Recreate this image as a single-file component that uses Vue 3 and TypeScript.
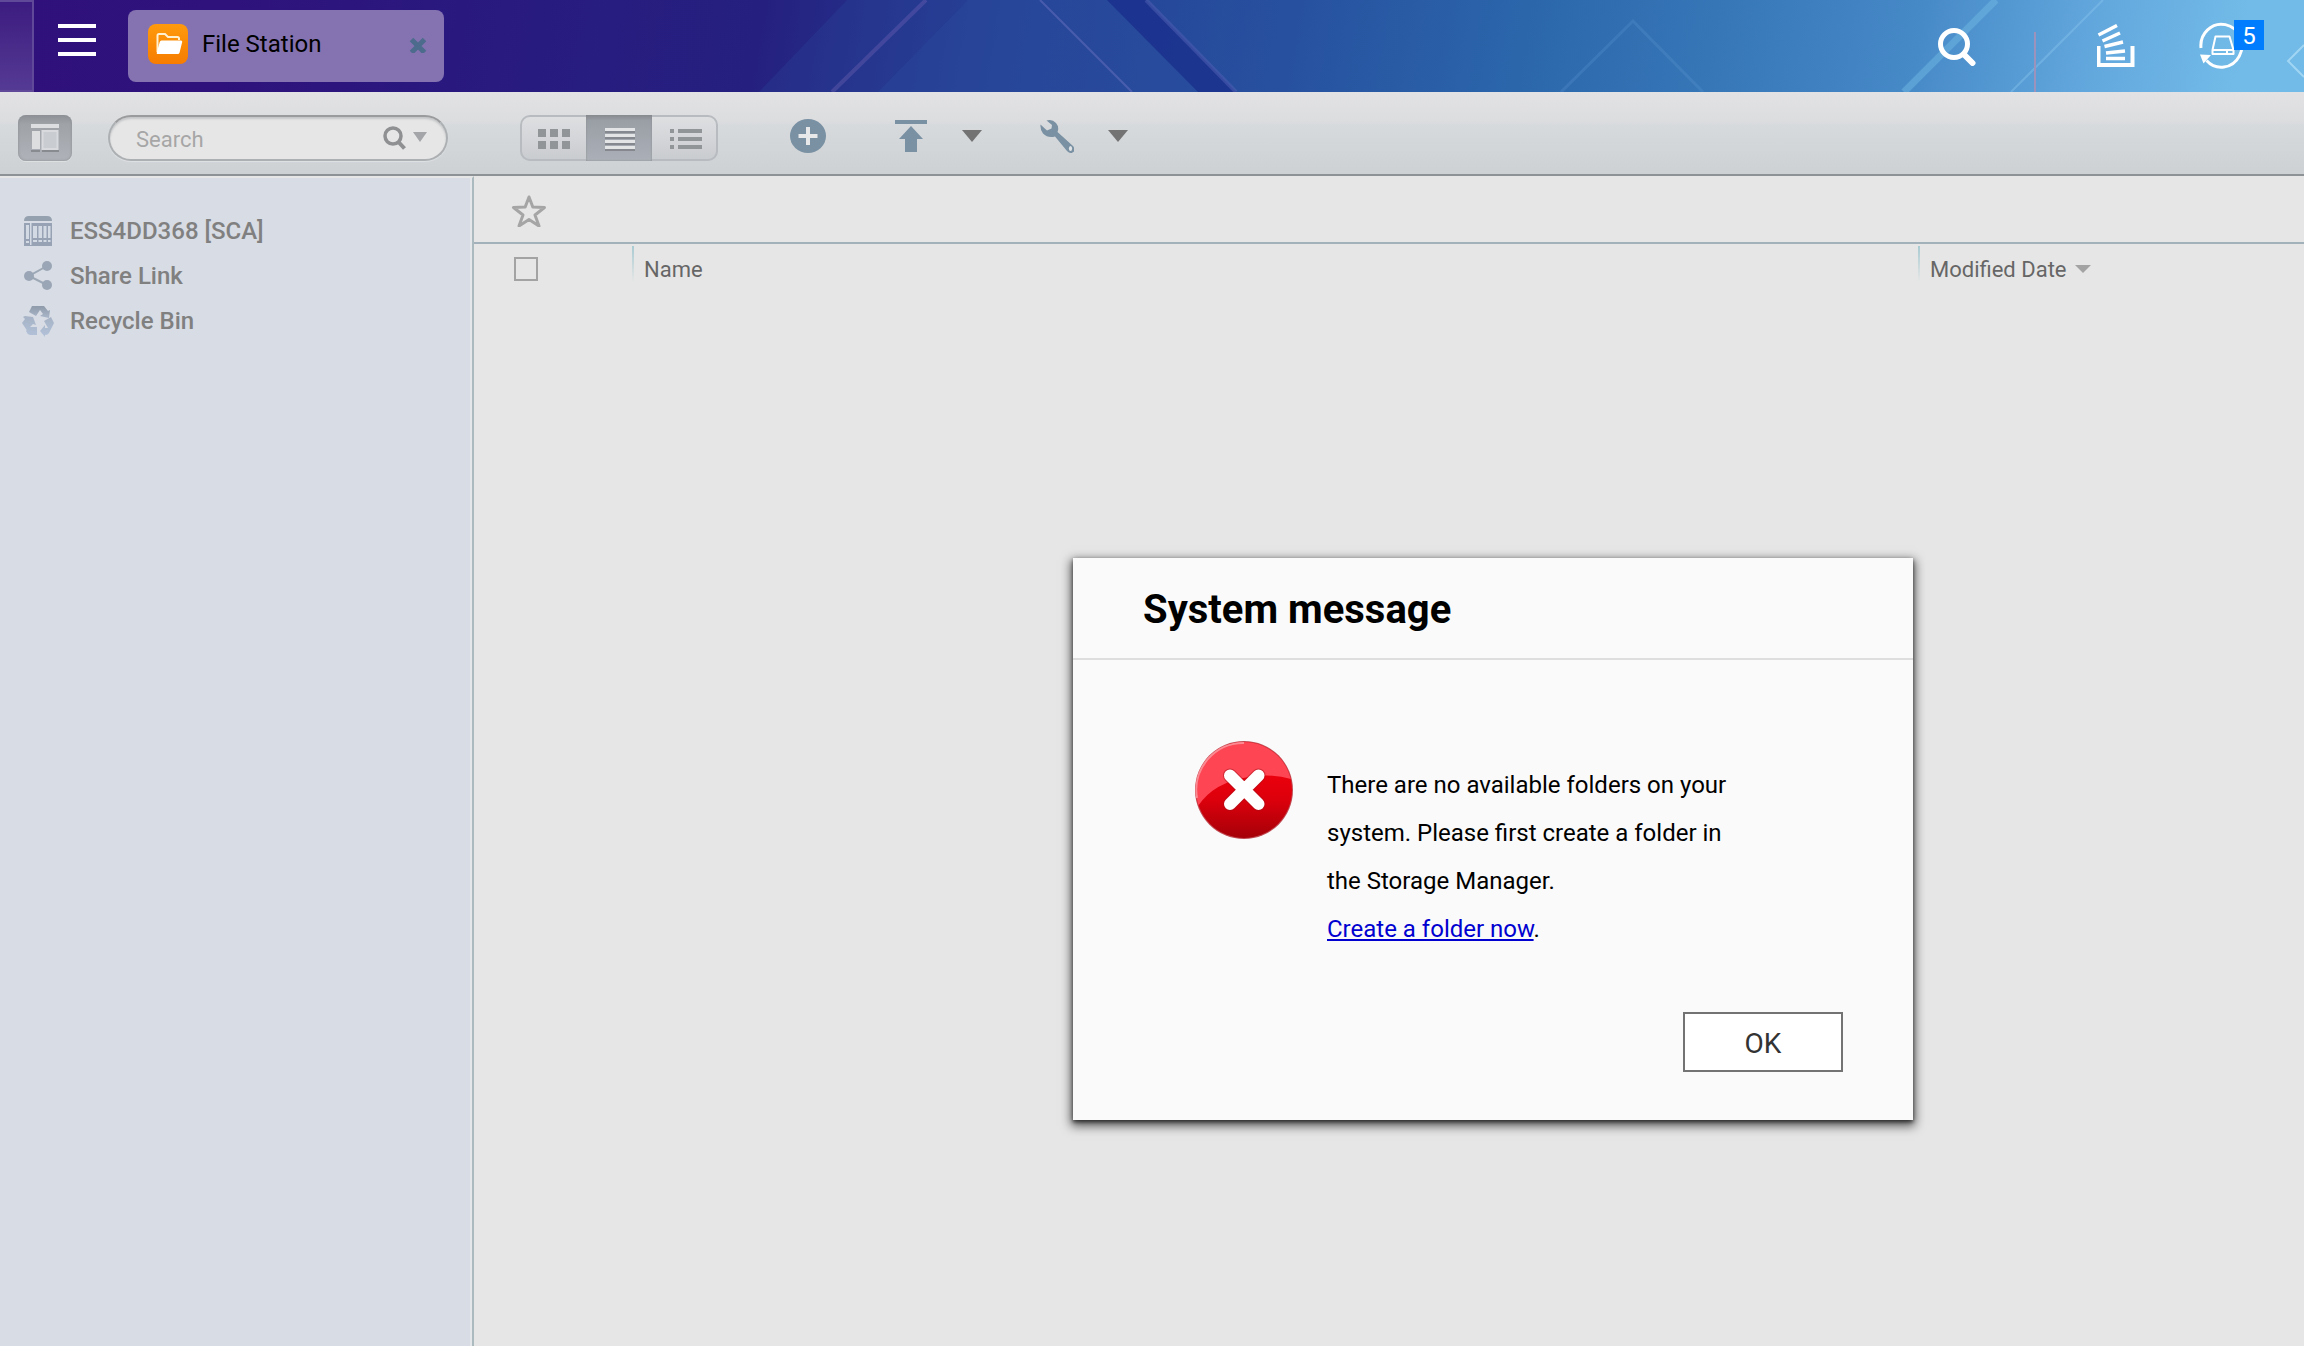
<script setup lang="ts">
import { ref } from 'vue'

type ViewMode = 'grid' | 'list' | 'details'

interface Place {
  id: 'nas' | 'share' | 'bin'
  label: string
}

const places: Place[] = [
  { id: 'nas', label: 'ESS4DD368 [SCA]' },
  { id: 'share', label: 'Share Link' },
  { id: 'bin', label: 'Recycle Bin' },
]

const view = ref<ViewMode>('list')
const query = ref('')
const taskCount = ref(5)
const messageOpen = ref(true)
</script>

<template>
  <div class="desktop">
    <header class="topbar">
      <svg class="wallpaper" viewBox="0 0 2304 92" preserveAspectRatio="none" aria-hidden="true">
        <path d="M847 0H1107L1198 92H759Z" fill="#2c4ea0" opacity=".26" />
        <path d="M968 0H1107L1198 92H878Z" fill="#2c4ea0" opacity=".3" />
        <path d="M1107 0H1146L1236 92H1198Z" fill="#1a2f8c" opacity=".8" />
        <path d="M926 0L832 92" stroke="#5a55a8" stroke-opacity=".55" stroke-width="4" />
        <path d="M1040 0L1132 92" stroke="#6a6fc0" stroke-opacity=".5" stroke-width="2" />
        <path d="M1146 0L1236 92" stroke="#4e5cb0" stroke-opacity=".55" stroke-width="4" />
        <path d="M1561 92L1633 21L1703 92" fill="none" stroke="#5a94d0" stroke-opacity=".3" stroke-width="3" />
        <path d="M1996 0L1904 92" stroke="#6fb8e2" stroke-opacity=".5" stroke-width="7" />
        <path d="M2103 0L2011 92" stroke="#8cc8f0" stroke-opacity=".4" stroke-width="2" />
        <path d="M2304 45L2288 61L2304 77" fill="none" stroke="#b4e0f8" stroke-opacity=".7" stroke-width="2" />
      </svg>
      <div class="show-desktop"></div>
      <button class="plain menu" type="button" aria-label="Main menu">
        <svg width="40" height="32" viewBox="0 0 40 32"><path d="M1 0h38v4H1zM1 14h38v4H1zM1 28h38v4H1z" fill="#fff" /></svg>
      </button>
      <div class="task">
        <svg width="40" height="40" viewBox="0 0 40 40" aria-hidden="true">
          <defs>
            <linearGradient id="orange" x1="0" y1="0" x2="0" y2="1">
              <stop offset="0" stop-color="#ff9a0c" />
              <stop offset="1" stop-color="#f67c00" />
            </linearGradient>
          </defs>
          <rect width="40" height="40" rx="8" fill="url(#orange)" />
          <path d="M9.500 28V11.500q0-1.500 1.500-1.500h6l3 3h9.500q1.500 0 1.500 1.500V16" fill="none" stroke="#fff0d0" stroke-width="2" />
          <path d="M13.500 16.500H33q1.500 0 1.200 1.500l-2.600 10.500q-.4 1.500-1.800 1.500H9.500q-1 0-.8-1l3-11q.4-1.500 1.800-1.500z" fill="#fff" />
        </svg>
        <span class="task-name">File Station</span>
        <button class="plain" type="button" aria-label="Close File Station">
          <svg width="18" height="18" viewBox="0 0 18 18"><path d="M2.500 4.500l13 13M15.500 4.500l-13 13" stroke="#4d6b8c" stroke-width="5" /></svg>
        </button>
      </div>
      <div class="tray">
        <button class="plain" type="button" aria-label="Search">
          <svg width="38" height="40" viewBox="0 0 38 40" fill="none" stroke="#fff">
            <circle cx="16" cy="18" r="13.500" stroke-width="5" />
            <path d="M26 28.500l8.500 8.500" stroke-width="6" stroke-linecap="round" />
          </svg>
        </button>
        <span class="tray-line"></span>
        <button class="plain" type="button" aria-label="Background tasks">
          <svg width="40" height="44" viewBox="0 0 40 44" fill="none" stroke="#fff">
            <path d="M1.500 22v19h34V22" stroke-width="4" />
            <path d="M1.500 11L20 1.500M5.500 17L23 9M7.500 22.500L26 18M9 29l19-2M9 34.500h19" stroke-width="3.500" />
          </svg>
        </button>
        <button class="plain sync" type="button" aria-label="External devices">
          <svg width="46" height="48" viewBox="0 0 46 48" fill="none" stroke="#fff">
            <path d="M2 26A20.500 21.500 0 1 1 7.500 38.500" stroke-width="3" />
            <path d="M1 32.500l11 .5L4.500 41.500z" fill="#fff" stroke="none" />
            <path d="M16.500 14.500h14l4 13.500H13.500zM13.500 28h21v4h-21zM28 28v4" stroke-width="2" stroke-linejoin="round" />
          </svg>
          <span class="badge">{{ taskCount }}</span>
        </button>
      </div>
    </header>

    <div class="toolbar">
      <button class="pane-toggle" type="button" aria-label="Toggle folder pane">
        <svg width="28" height="28" viewBox="0 0 28 28">
          <path d="M0 27h9M11 27h17" stroke="#888c91" stroke-width="2" />
          <path d="M0 0h28v4H0z" fill="#dcdee0" />
          <path d="M1 7h8v18H1z" fill="#dcdee0" />
          <path d="M11.500 7h15v18h-15z" fill="#c9ccd0" stroke="#d8dade" stroke-width="2" />
        </svg>
      </button>
      <label class="search">
        <input v-model="query" type="text" placeholder="Search" aria-label="Search" />
        <svg width="46" height="26" viewBox="0 0 46 26" fill="none" aria-hidden="true">
          <circle cx="11" cy="11" r="8" stroke="#8e9092" stroke-width="3.500" />
          <path d="M16.500 17l6 6.500" stroke="#8e9092" stroke-width="4" />
          <path d="M31 7h14l-7 10z" fill="#a3a5a8" />
        </svg>
      </label>

      <div class="views" role="group" aria-label="View mode">
        <button type="button" :class="{ on: view === 'grid' }" aria-label="Thumbnails" @click="view = 'grid'">
          <svg width="34" height="22" viewBox="0 0 34 22"><path d="M1 1h8v8H1zM13 1h8v8h-8zM25 1h8v8h-8zM1 13h8v8H1zM13 13h8v8h-8zM25 13h8v8h-8z" fill="#929598" /></svg>
        </button>
        <button type="button" :class="{ on: view === 'list' }" aria-label="List" @click="view = 'list'">
          <svg width="34" height="24" viewBox="0 0 34 24">
            <path d="M2 5h30M2 11h30M2 17h30M2 23h30" stroke="#85898f" stroke-width="2" />
            <path d="M2 2.500h30M2 8.500h30M2 14.500h30M2 20.500h30" stroke="#e2e4e6" stroke-width="3" />
          </svg>
        </button>
        <button type="button" :class="{ on: view === 'details' }" aria-label="Details" @click="view = 'details'">
          <svg width="34" height="22" viewBox="0 0 34 22" stroke="#929598" stroke-width="4"><path d="M1 3h4M1 11h4M1 19h4M9 3h24M9 11h24M9 19h24" /></svg>
        </button>
      </div>

      <div class="actions">
        <button class="plain" type="button" aria-label="Create folder">
          <svg width="36" height="36" viewBox="0 0 36 36"><ellipse cx="18" cy="18" rx="18" ry="17" fill="#7991a3" /><path d="M18 9v18M8.500 18h19" stroke="#e6e8ea" stroke-width="4" /></svg>
        </button>
        <button class="plain split upload" type="button" aria-label="Upload">
          <svg width="34" height="36" viewBox="0 0 34 36" fill="#7991a3"><path d="M1 2h32v4H1zM17 8l12 13h-6v13H11V21H5z" /></svg>
          <svg width="20" height="12" viewBox="0 0 20 12"><path d="M0 0h20L10 12z" fill="#737373" /></svg>
        </button>
        <button class="plain split" type="button" aria-label="More actions">
          <svg width="34" height="36" viewBox="0 0 34 36">
            <path d="M6.500 2.500Q12 .5 16 5q3.500 4 1.500 9L33 28q3.500 5-.5 6.500Q30 36 27 33L15 18.500Q8 20.500 3 15.500 0 12 .5 6.500l6.500 6 4.500-2 .5-3.500z" fill="#7991a3" />
            <ellipse cx="30.500" cy="30.500" rx="1.600" ry="2.500" fill="#dfe3e6" />
          </svg>
          <svg width="20" height="12" viewBox="0 0 20 12"><path d="M0 0h20L10 12z" fill="#737373" /></svg>
        </button>
      </div>
    </div>

    <div class="body">
      <nav class="sidebar" aria-label="Folders">
        <ul>
          <li v-for="place in places" :key="place.id">
            <a href="#">
              <svg v-if="place.id === 'nas'" width="32" height="32" viewBox="0 0 32 32" aria-hidden="true">
                <path d="M2 6q0-5 5-5h18q5 0 5 5z" fill="#96a1b0" />
                <path d="M2 8h28v23H2z" fill="#97a3b5" />
                <path d="M4 10h3v14H4zM4 26h3v2H4zM11 11h4v12h-4zM16.500 11H20v12h-3.500zM21.500 11h3v12h-3zM26 11h2.500v12H26zM11 25h4v2h-4zM16.500 25H20v2h-3.500zM21.500 25h3v2h-3zM26 25h2.500v2H26zM8 8h1.500v22H8z" fill="#d4dae4" />
              </svg>
              <svg v-else-if="place.id === 'share'" width="32" height="32" viewBox="0 0 32 32" fill="#9aa5b5" aria-hidden="true">
                <path d="M25 6L7 16l18 9" fill="none" stroke="#9da8b6" stroke-width="2" />
                <circle cx="25" cy="6" r="5" /><circle cx="7" cy="16" r="5" /><circle cx="25" cy="25" r="5" />
              </svg>
              <svg v-else width="32" height="32" viewBox="0 0 32 32" aria-hidden="true">
                <defs>
                  <linearGradient id="bin" gradientUnits="userSpaceOnUse" x1="0" y1="1" x2="0" y2="31">
                    <stop offset="0" stop-color="#8f9baa" />
                    <stop offset=".35" stop-color="#a6b3c6" />
                    <stop offset="1" stop-color="#b2c1d8" />
                  </linearGradient>
                </defs>
                <g fill="url(#bin)">
                  <path d="M10 1h12l4 5 2-1-1 8-9-2 3-2-3-4-4 6-7-4z" />
                  <path d="M3 11l8 1 3 8-3-1-3 3-2 5-6-9 3-4-2-2z" />
                  <path d="M7 22h8v8H8q-3-1-4-4z" />
                  <path d="M29 12l3 6-5 10q-1 2-4 2v2l-5-6 5-6v3h3l-4-7z" />
                </g>
              </svg>
              <span>{{ place.label }}</span>
            </a>
          </li>
        </ul>
      </nav>

      <main class="content">
        <div class="path">
          <button class="plain" type="button" aria-label="Add to favorites">
            <svg width="36" height="32" viewBox="0 0 36 32"><path d="M18 2l3.800 10 11.700.5-9.500 7.500 4 11-10-6.500-10 6.500 4-11-9.500-7.500 11.700-.5z" fill="none" stroke="#a5a5a5" stroke-width="3" stroke-linejoin="round" /></svg>
          </button>
        </div>
        <table>
          <colgroup>
            <col class="c-check" />
            <col />
            <col class="c-date" />
          </colgroup>
          <thead>
            <tr>
              <th scope="col"><input type="checkbox" aria-label="Select all" /></th>
              <th scope="col" class="ruled">Name</th>
              <th scope="col" class="ruled">
                <span class="sorted">Modified Date
                  <svg width="16" height="8" viewBox="0 0 16 8" aria-hidden="true"><path d="M0 0h16L8 8z" fill="#a3a3a3" /></svg>
                </span>
              </th>
            </tr>
          </thead>
        </table>
      </main>
    </div>

    <div v-if="messageOpen" class="overlay">
      <section class="dialog" role="alertdialog" aria-labelledby="msg-title">
        <h2 id="msg-title">System message</h2>
        <div class="message">
          <svg width="100" height="100" viewBox="0 0 100 100" aria-hidden="true">
            <defs>
              <linearGradient id="red" x1="0" y1="0" x2="0" y2="1">
                <stop offset=".35" stop-color="#ea000c" />
                <stop offset=".6" stop-color="#dc000c" />
                <stop offset="1" stop-color="#a50008" />
              </linearGradient>
              <clipPath id="disc"><circle cx="50" cy="50" r="48" /></clipPath>
            </defs>
            <circle cx="50" cy="50" r="49" fill="#c04a52" />
            <circle cx="50" cy="50" r="48" fill="url(#red)" />
            <path d="M0 0h100v40Q80 33 55 37 20 42 4 66L0 60z" fill="#fd4553" clip-path="url(#disc)" />
            <path d="M3 58A47 47 0 0 1 50 3" fill="none" stroke="#fb8a92" stroke-width="2" />
            <path d="M36 35.500l28.500 28.500M64.500 35.500L36 64" stroke="#a8101a" stroke-opacity=".5" stroke-width="14" stroke-linecap="round" />
            <path d="M36 35.500l28.500 28.500M64.500 35.500L36 64" stroke="#fff" stroke-width="12" stroke-linecap="round" />
          </svg>
          <p>
            There are no available folders on your system. Please first create a folder in the Storage Manager.<br />
            <a href="#">Create a folder now</a>.
          </p>
        </div>
        <footer>
          <button type="button" @click="messageOpen = false">OK</button>
        </footer>
      </section>
    </div>
  </div>
</template>

<style>
body {
  background: #e6e6e6;
}
</style>

<style scoped>
* {
  box-sizing: border-box;
}

.desktop {
  position: relative;
  display: flex;
  flex-direction: column;
  min-height: 100vh;
  overflow: hidden;
  font-family: Roboto, "Liberation Sans", sans-serif;
  font-size: 24px;
  color: #000;
}

svg {
  display: block;
  flex: none;
}

button,
input {
  font: inherit;
}

.plain {
  display: flex;
  padding: 0;
  border: 0;
  background: none;
}

.topbar {
  position: relative;
  display: flex;
  align-items: center;
  height: 92px;
  background: linear-gradient(100deg, #30117b 0%, #2f127c 10%, #29197f 20%, #252080 33%, #254096 44%, #27519f 56%, #2b66ab 66%, #3676b7 74%, #478ac8 83%, #64a9de 91%, #72bbe8 97%, #72bbe8 100%);
}

.wallpaper {
  position: absolute;
  inset: 0;
  width: 100%;
  height: 100%;
}

.show-desktop,
.menu,
.task,
.tray {
  position: relative;
}

.show-desktop {
  width: 34px;
  height: 92px;
  border: 2px solid #614999;
  border-left: 0;
  background: linear-gradient(#3c1c80, #553a94);
}

.menu {
  margin: 0 31px 12px 23px;
}

.task {
  display: flex;
  align-items: center;
  width: 316px;
  height: 72px;
  padding: 0 17px 4px 20px;
  border-radius: 8px;
  background: #8473b0;
}

.task-name {
  flex: 1;
  padding-left: 14px;
}

.tray {
  display: flex;
  align-items: center;
  height: 92px;
  margin-left: auto;
  padding-right: 59px;
}

.tray-line {
  align-self: flex-end;
  width: 2px;
  height: 60px;
  margin: 0 61px 0 58px;
  background: #9c93bd;
}

.sync {
  position: relative;
  margin-left: 62px;
}

.badge {
  position: absolute;
  top: -2px;
  right: -19px;
  width: 30px;
  height: 30px;
  background: #007dff;
  color: #fff;
  line-height: 32px;
  text-align: center;
}

.toolbar {
  display: flex;
  align-items: center;
  height: 84px;
  padding: 10px 18px 0;
  border-bottom: 2px solid #8d9296;
  background: linear-gradient(#e2e2e4, #dcdddf 35%, #d7dadd 40%, #cdd1d4);
}

.pane-toggle {
  display: flex;
  align-items: center;
  justify-content: center;
  width: 54px;
  height: 46px;
  padding: 0;
  border: 0;
  border-radius: 8px;
  background: linear-gradient(#8e9297, #9fa3a8 20%, #afb3b9);
  box-shadow: inset 0 0 3px #8a8e92, 0 1px 0 #dee0e2;
}

.search {
  display: flex;
  align-items: center;
  width: 340px;
  height: 46px;
  margin-left: 36px;
  padding: 0 18px 0 26px;
  border: 2px solid #adb0b3;
  border-top-color: #999b9d;
  border-radius: 23px;
  background: #e6e6e6;
  box-shadow: inset 0 2px 2px #c4c6c8, 0 1px 1px #dfe1e3;
}

.search input {
  flex: 1;
  min-width: 0;
  padding: 2px 0 0;
  border: 0;
  outline: 0;
  background: none;
  font-size: 22px;
}

.search input::placeholder {
  color: #a6a6a6;
  opacity: 1;
}

.views {
  display: flex;
  width: 198px;
  height: 46px;
  margin-left: 72px;
  border-radius: 10px;
  background: linear-gradient(#dfe0e2, #c8cbcf);
  box-shadow: inset 0 0 0 2px #b8bbbf;
}

.views button {
  display: flex;
  flex: 1;
  align-items: center;
  justify-content: center;
  padding: 2px 0 0 2px;
  border: 0;
  background: none;
}

.views .on {
  background: linear-gradient(#878a8e, #9a9ea5 12%, #abb0b8);
  box-shadow: inset 0 0 2px #85888c;
}

.actions {
  display: flex;
  align-items: center;
  margin: 0 0 4px 72px;
}

.split {
  align-items: center;
  gap: 34px;
}

.upload {
  margin: 0 58px 0 68px;
}

.body {
  display: flex;
  flex: 1;
}

.sidebar {
  width: 474px;
  border-top: 2px solid #e6e6e6;
  border-right: 2px solid #abbabf;
  background: #d8dce4;
  box-shadow: inset -2px 0 0 #e4e6e9;
}

.sidebar ul {
  margin: 0;
  padding: 30px 22px;
  list-style: none;
}

.sidebar a {
  display: flex;
  align-items: center;
  gap: 16px;
  height: 45px;
  color: #808080;
  font-weight: 500;
  text-decoration: none;
}

.content {
  flex: 1;
}

.path {
  display: flex;
  align-items: center;
  height: 68px;
  padding: 4px 0 0 37px;
  border-bottom: 2px solid #a2b1ba;
}

table {
  width: 100%;
  border-collapse: collapse;
  table-layout: fixed;
  font-size: 22px;
}

.c-check {
  width: 158px;
}

.c-date {
  width: 386px;
}

th {
  height: 50px;
  padding: 0 0 0 12px;
  color: #666;
  font-weight: 400;
  text-align: left;
}

th:first-child {
  padding-left: 40px;
}

th input {
  display: block;
  appearance: none;
  width: 24px;
  height: 24px;
  margin: 0;
  border: 2px solid #a3a3a3;
}

.ruled {
  background: linear-gradient(#a9cbd2, #e6e6e6) 0 2px / 2px 36px no-repeat;
}

.sorted {
  display: flex;
  align-items: center;
  gap: 8px;
}

.overlay {
  position: absolute;
  inset: 0;
  display: grid;
  place-items: center;
  padding: 332px 0 0 682px;
}

.dialog {
  width: 840px;
  background: #fafafa;
  box-shadow: 0 4px 10px 2px #0009, 0 2px 4px #0009;
}

h2 {
  margin: 0;
  padding: 4px 70px 0;
  border-bottom: 2px solid #dedede;
  font-size: 40px;
  font-weight: 700;
  line-height: 96px;
}

.message {
  display: flex;
  gap: 33px;
  padding: 80px 176px 0 121px;
}

.message p {
  margin: 21px 0 0;
  line-height: 48px;
}

.message a {
  color: #0000d0;
}

footer {
  display: flex;
  justify-content: flex-end;
  padding: 59px 70px 48px;
}

footer button {
  width: 160px;
  height: 60px;
  padding: 2px 0 0;
  border: 2px solid #737373;
  background: #fff;
  color: #333;
  font-size: 28px;
}
</style>
